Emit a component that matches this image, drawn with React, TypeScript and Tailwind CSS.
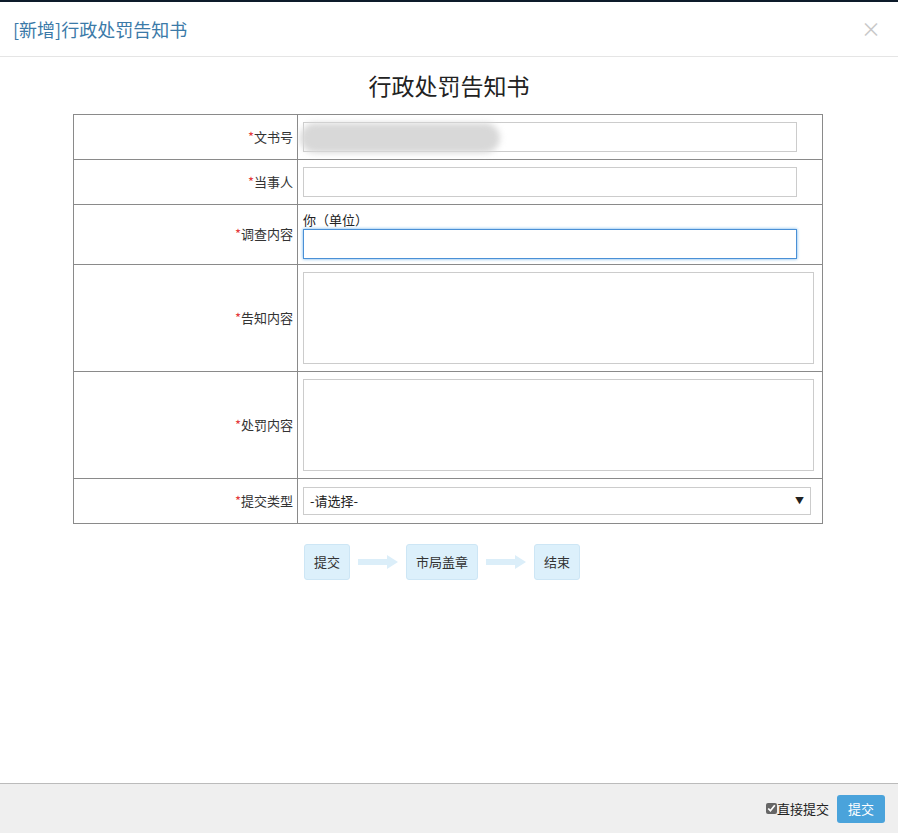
import React from 'react';

const FONT = { fontFamily: '"Microsoft YaHei", "Noto Sans CJK SC", sans-serif' };

const Label = ({ text }: { text: string }) => (
  <td className="w-[224px] border border-[#8a8a8a] pr-1 text-right text-[13px] text-[#333]">
    <span className="text-[#e4393c]">*</span>{text}
  </td>
);

const Arrow = () => (
  <svg width="40" height="14" viewBox="0 0 40 14" className="mx-[8px]">
    <rect x="0" y="4" width="30" height="6" fill="#dbeef9" />
    <polygon points="29,0 40,7 29,14" fill="#dbeef9" />
  </svg>
);

const Step = ({ text }: { text: string }) => (
  <div className="flex h-[36px] items-center rounded-[3px] border border-[#cde6f5] bg-[#dcf0fb] px-[9px] text-[13px] text-[#333]">
    {text}
  </div>
);

export default function App() {
  return (
    <div className="h-[833px] w-[898px] bg-[#0d1b2a] pt-[2px]" style={FONT}>
      <div className="flex h-[831px] flex-col bg-white">
        {/* header */}
        <div className="flex h-[55px] items-center justify-between border-b border-[#e5e5e5] px-[13px]">
          <span className="text-[18px] text-[#3b7aa8]">[新增]行政处罚告知书</span>
          <span className="mr-[4px] text-[20px] text-[#c8c8c8]">×</span>
        </div>

        {/* body */}
        <div className="flex-1">
          <h1 className="mt-[11px] text-center text-[23px] text-[#222]">行政处罚告知书</h1>
          <table className="mx-[73px] mt-[11px] w-[750px] border-collapse">
            <tbody>
              <tr className="h-[45px]">
                <Label text="文书号" />
                <td className="relative border border-[#8a8a8a] pl-[5px]">
                  <input className="h-[30px] w-[494px] border border-[#ccc]" />
                  <div className="absolute left-[2px] top-[8px] h-[30px] w-[200px] rounded-full bg-[#d8d8d8] blur-[3px]" />
                </td>
              </tr>
              <tr className="h-[45px]">
                <Label text="当事人" />
                <td className="border border-[#8a8a8a] pl-[5px]">
                  <input className="h-[30px] w-[494px] border border-[#ccc]" />
                </td>
              </tr>
              <tr className="h-[60px]">
                <Label text="调查内容" />
                <td className="border border-[#8a8a8a] pl-[5px] align-top">
                  <div className="mt-[6px] text-[13px] leading-[18px] text-[#222]">你（单位）</div>
                  <input className="h-[30px] w-[494px] border border-[#4a90d6] shadow-[0_0_3px_#66afe9] outline-none" />
                </td>
              </tr>
              <tr className="h-[107px]">
                <Label text="告知内容" />
                <td className="border border-[#8a8a8a] pl-[5px]">
                  <textarea className="block h-[92px] w-[511px] resize-none border border-[#ccc]" />
                </td>
              </tr>
              <tr className="h-[107px]">
                <Label text="处罚内容" />
                <td className="border border-[#8a8a8a] pl-[5px]">
                  <textarea className="block h-[92px] w-[511px] resize-none border border-[#ccc]" />
                </td>
              </tr>
              <tr className="h-[45px]">
                <Label text="提交类型" />
                <td className="border border-[#8a8a8a] pl-[5px]">
                  <div className="flex h-[28px] w-[508px] items-center justify-between border border-[#ccc] px-[6px] text-[13px] text-[#222]">
                    <span>-请选择-</span>
                    <span className="text-[9px]">▼</span>
                  </div>
                </td>
              </tr>
            </tbody>
          </table>

          <div className="ml-[304px] mt-[20px] flex items-center">
            <Step text="提交" />
            <Arrow />
            <Step text="市局盖章" />
            <Arrow />
            <Step text="结束" />
          </div>
        </div>

        {/* footer */}
        <div className="flex h-[50px] items-center justify-end gap-[8px] border-t border-[#bbb] bg-[#efefef] pr-[13px]">
          <label className="flex items-center text-[13px] text-[#222]">
            <input type="checkbox" defaultChecked className="h-[11px] w-[11px] accent-[#666]" />直接提交
          </label>
          <button className="h-[28px] w-[48px] rounded-[3px] bg-[#4aa3db] text-[13px] text-white">提交</button>
        </div>
      </div>
    </div>
  );
}
